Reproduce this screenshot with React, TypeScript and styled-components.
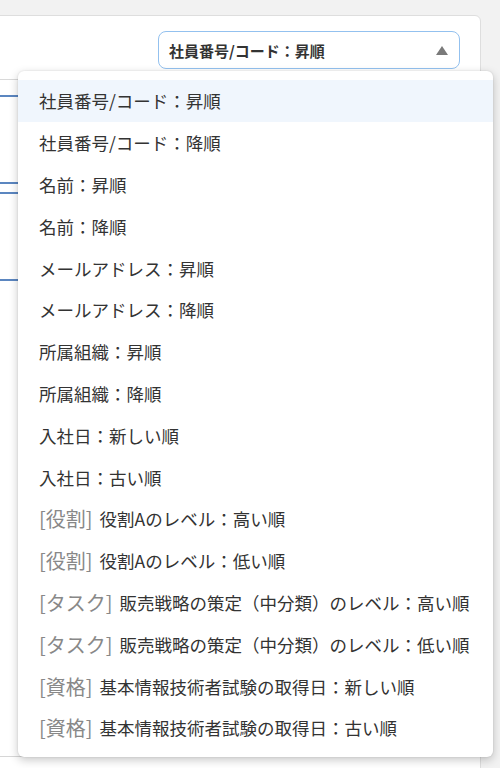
import styled, { createGlobalStyle } from "styled-components"

const GlobalStyle = createGlobalStyle`
  body {
    margin: 0;
    background: #f2f2f2;
    font-family: "Noto Sans CJK JP", "Noto Sans", sans-serif;
    color: #333;
  }
`

const Page = styled.div`
  position: relative;
  height: 768px;
  overflow: hidden;
  padding-top: 15px;
  box-sizing: border-box;
`

const Card = styled.div`
  margin-left: -20px;
  margin-right: 19px;
  height: 785px;
  background: #fff;
  border: 1px solid #dedede;
  border-radius: 6px;
  box-sizing: border-box;
  display: flex;
  flex-direction: column;
`

const Header = styled.div`
  display: flex;
  justify-content: flex-end;
  padding: 15px 20px 10px 0;
`

const Select = styled.div`
  width: 302px;
  height: 38px;
  box-sizing: border-box;
  border: 1.5px solid #93c1ef;
  border-radius: 8px;
  display: flex;
  align-items: center;
  justify-content: space-between;
  padding: 0 10px 0 10px;
  font-size: 15px;
  font-weight: 700;
  color: #333;
`

const Caret = styled.span`
  width: 0;
  height: 0;
  border-left: 6px solid transparent;
  border-right: 6px solid transparent;
  border-bottom: 9px solid #7a7a7a;
  margin-right: 1px;
`

const Table = styled.div`
  border-top: 1px solid #d9d9d9;
  padding-top: 15px;
  display: flex;
  flex-direction: column;
  gap: 8px;
  flex: 1;
`

const Row = styled.div`
  height: 89px;
  border-top: 2px solid #5b86c0;
  border-bottom: 2px solid #5b86c0;
  box-sizing: border-box;
`

const Footer = styled.div`
  border-top: 1px solid #d6d6d6;
  height: 43px;
  display: flex;
  justify-content: flex-end;
  padding: 15px 72px 0 0;
  box-sizing: border-box;
`

const PageButton = styled.div`
  width: 39px;
  height: 30px;
  background: #dfe5ec;
  border-radius: 3px;
`

const Menu = styled.ul`
  position: absolute;
  left: 18px;
  top: 71px;
  width: 475px;
  margin: 0;
  padding: 9px 0 8px;
  list-style: none;
  background: #fff;
  border-radius: 6px;
  box-shadow: 0 3px 10px rgba(0, 0, 0, 0.22), 0 0 2px rgba(0, 0, 0, 0.12);
  box-sizing: border-box;
`

const Item = styled.li<{ $active?: boolean }>`
  height: 41.8px;
  display: flex;
  align-items: center;
  padding-left: 21px;
  font-size: 17.5px;
  color: #333;
  white-space: nowrap;
  background: ${(p) => (p.$active ? "#f0f6fd" : "transparent")};
`

const Tag = styled.span`
  font-size: 20px;
  color: #888;
  margin-right: 7px;
  font-weight: 400;
`

const options = [
  { label: "社員番号/コード：昇順" },
  { label: "社員番号/コード：降順" },
  { label: "名前：昇順" },
  { label: "名前：降順" },
  { label: "メールアドレス：昇順" },
  { label: "メールアドレス：降順" },
  { label: "所属組織：昇順" },
  { label: "所属組織：降順" },
  { label: "入社日：新しい順" },
  { label: "入社日：古い順" },
  { tag: "[役割]", label: "役割Aのレベル：高い順" },
  { tag: "[役割]", label: "役割Aのレベル：低い順" },
  { tag: "[タスク]", label: "販売戦略の策定（中分類）のレベル：高い順" },
  { tag: "[タスク]", label: "販売戦略の策定（中分類）のレベル：低い順" },
  { tag: "[資格]", label: "基本情報技術者試験の取得日：新しい順" },
  { tag: "[資格]", label: "基本情報技術者試験の取得日：古い順" },
]

export default function App() {
  return (
    <Page>
      <GlobalStyle />
      <Card>
        <Header>
          <Select>
            社員番号/コード：昇順
            <Caret />
          </Select>
        </Header>
        <Table>
          <Row />
          <Row />
        </Table>
        <Footer>
          <PageButton />
        </Footer>
      </Card>
      <Menu>
        {options.map((o, i) => (
          <Item key={i} $active={i === 0}>
            {o.tag && <Tag>{o.tag}</Tag>}
            {o.label}
          </Item>
        ))}
      </Menu>
    </Page>
  )
}
